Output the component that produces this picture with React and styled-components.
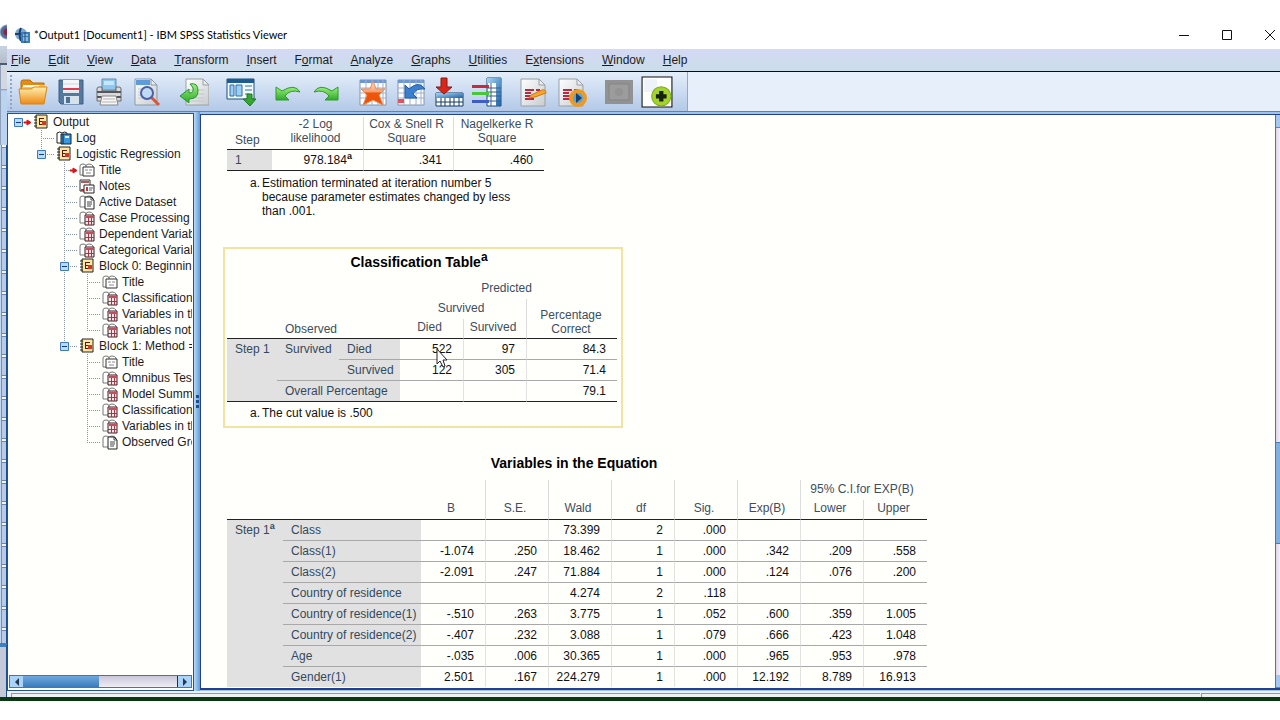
import React from "react";
import styled, { createGlobalStyle } from "styled-components";

const menus = [
  ["", "F", "ile"],
  ["", "E", "dit"],
  ["", "V", "iew"],
  ["", "D", "ata"],
  ["", "T", "ransform"],
  ["", "I", "nsert"],
  ["F", "o", "rmat"],
  ["", "A", "nalyze"],
  ["", "G", "raphs"],
  ["", "U", "tilities"],
  ["E", "x", "tensions"],
  ["", "W", "indow"],
  ["", "H", "elp"],
];

const tree = {
  label: "Output",
  icon: "book",
  marked: true,
  children: [
    { label: "Log", icon: "log" },
    {
      label: "Logistic Regression",
      icon: "book",
      children: [
        { label: "Title", icon: "title", marked: true },
        { label: "Notes", icon: "notes" },
        { label: "Active Dataset", icon: "page" },
        { label: "Case Processing", icon: "table" },
        { label: "Dependent Variab", icon: "table" },
        { label: "Categorical Variab", icon: "table" },
        {
          label: "Block 0: Beginning",
          icon: "book",
          children: [
            { label: "Title", icon: "title" },
            { label: "Classification", icon: "table" },
            { label: "Variables in th", icon: "table" },
            { label: "Variables not", icon: "table" },
          ],
        },
        {
          label: "Block 1: Method =",
          icon: "book",
          children: [
            { label: "Title", icon: "title" },
            { label: "Omnibus Tes", icon: "table" },
            { label: "Model Summ", icon: "table" },
            { label: "Classification", icon: "table" },
            { label: "Variables in th", icon: "table" },
            { label: "Observed Gro", icon: "page" },
          ],
        },
      ],
    },
  ],
};

const equation = [
  ["Class", "", "", "73.399", "2", ".000", "", "", ""],
  ["Class(1)", "-1.074", ".250", "18.462", "1", ".000", ".342", ".209", ".558"],
  ["Class(2)", "-2.091", ".247", "71.884", "1", ".000", ".124", ".076", ".200"],
  ["Country of residence", "", "", "4.274", "2", ".118", "", "", ""],
  ["Country of residence(1)", "-.510", ".263", "3.775", "1", ".052", ".600", ".359", "1.005"],
  ["Country of residence(2)", "-.407", ".232", "3.088", "1", ".079", ".666", ".423", "1.048"],
  ["Age", "-.035", ".006", "30.365", "1", ".000", ".965", ".953", ".978"],
  ["Gender(1)", "2.501", ".167", "224.279", "1", ".000", "12.192", "8.789", "16.913"],
  ["", "", "", "", "", "", "", "", ""],
];

/* ---------- toolbar drawings ---------- */

const Svg = ({ children, size = 30 }) => (
  <svg width={size} height={size} viewBox="0 0 30 30" aria-hidden="true">
    {children}
  </svg>
);

const Gradients = () => (
  <HiddenSvg width="0" height="0" aria-hidden="true">
    <defs>
      <linearGradient id="gOrange" x1="0" y1="0" x2="0" y2="1">
        <stop offset="0" stopColor="#fff0b0" />
        <stop offset="1" stopColor="#ee8a14" />
      </linearGradient>
      <linearGradient id="gStar" x1="0" y1="0" x2="0" y2="1">
        <stop offset="0" stopColor="#fde4d2" />
        <stop offset="0.45" stopColor="#f6a070" />
        <stop offset="0.5" stopColor="#f0560a" />
        <stop offset="1" stopColor="#e85008" />
      </linearGradient>
      <linearGradient id="gBlue" x1="0" y1="0" x2="1" y2="1">
        <stop offset="0" stopColor="#a8d4f4" />
        <stop offset="1" stopColor="#1c62a4" />
      </linearGradient>
      <linearGradient id="gGreen" x1="0" y1="0" x2="0" y2="1">
        <stop offset="0" stopColor="#9cf07c" />
        <stop offset="1" stopColor="#2eaa28" />
      </linearGradient>
      <linearGradient id="gPage" x1="0" y1="0" x2="1" y2="1">
        <stop offset="0" stopColor="#ffffff" />
        <stop offset="1" stopColor="#c8cccf" />
      </linearGradient>
    </defs>
  </HiddenSvg>
);

const FolderIcon = () => (
  <Svg>
    <path d="M3 26V5q0-2 2-2h7l3 3h11v19z" fill="#e58d12" stroke="#b86e0c" />
    <path d="M5 8h21v5H5z" fill="#fffbe8" />
    <path d="M4 10h16l2-2h5v4H4z" fill="#f6c35c" />
    <path d="M1 12h12l3-2h13l-3 17H3z" fill="url(#gOrange)" stroke="#d98612" />
  </Svg>
);

const SaveIcon = () => (
  <Svg>
    <path d="M3 3h24v24H5l-2-2z" fill="#54789e" stroke="#3f6084" />
    <path d="M7 3h16v13H7z" fill="#f4f6f9" />
    <path d="M7 11h16v2H7z" fill="#e03a50" />
    <path d="M7 7h16M7 15h16" stroke="#cfd8e2" />
    <path d="M8 19h15v8H8z" fill="#d7e3ea" />
    <path d="M10 20h4v6h-4z" fill="#4c6f94" />
  </Svg>
);

const PrintIcon = () => (
  <Svg>
    <path d="M8 2h14v11H8z" fill="#8cc8f0" stroke="#6a8ca6" />
    <path d="M10 4h10v4H10z" fill="#c8e6fa" />
    <path d="M3 12q0-2 2-2h3v4h14v-4h3q2 0 2 2v12H3z" fill="#dadada" stroke="#6a6a6a" />
    <path d="M3 15h24M3 20h24" stroke="#55585a" strokeWidth="2" />
    <path d="M8 19h14l2 9H6z" fill="#f6f6f6" stroke="#888" />
    <path d="M9 22h12M8 25h14" stroke="#b5b5b5" />
  </Svg>
);

const PreviewIcon = () => (
  <Svg>
    <path d="M3 2h16l6 6v20H3z" fill="url(#gPage)" stroke="#8b98a6" />
    <path d="M4 3h14v5H4z" fill="#5f9bd8" />
    <path d="M6 12h14M6 15h14M6 18h12M6 21h14" stroke="#c3cad0" />
    <path d="M19 2v6h6z" fill="#e8ecef" stroke="#8b98a6" />
    <path d="m19 20 8 8" stroke="#d9563a" strokeWidth="3" />
    <circle cx="15" cy="16" r="6" fill="#b9d9f6" fillOpacity="0.8" stroke="#4b5fa8" strokeWidth="2" />
  </Svg>
);

const ExportIcon = () => (
  <Svg>
    <path d="M7 2h17l6 6v20H7z" fill="url(#gPage)" stroke="#9aa0a5" />
    <path d="M11 13h14M11 17h14M11 21h14M11 24h14" stroke="#c0c6ca" />
    <path d="M24 2v6h6z" fill="#e8ecef" stroke="#9aa0a5" />
    <path d="M11 7q8-2 8 7 0 8-9 8v4L1 19l9-7v4q5 0 4-5-1-2-3-4z" fill="url(#gGreen)" stroke="#279238" />
  </Svg>
);

const RecallIcon = () => (
  <Svg>
    <path d="M1 2h27v20H1z" fill="#f4f9fd" stroke="#1b4f80" />
    <path d="M1 2h27v4H1z" fill="#1d5b91" />
    <path d="M4 8h4v11H4zM10 8h6v11h-6z" fill="#9bd0f4" stroke="#2e6da4" />
    <path d="M19 9h7M19 13h7M19 17h4" stroke="#8bb9dd" strokeWidth="2" />
    <path d="M21 17h5v5h4l-6 7-7-7h4z" fill="#35a632" stroke="#1f7a20" />
  </Svg>
);

const UndoIcon = ({ flip }) => (
  <Svg>
    <path
      d="M3 10v13h13l-4-4q5-7 15-4-5-9-18-1z"
      fill="url(#gGreen)"
      stroke="#2f9a2c"
      transform={flip ? "translate(30 0) scale(-1 1)" : undefined}
    />
  </Svg>
);

const Grid = ({ x = 2, y = 3, w = 26, h = 25, head = 3 }) => (
  <g>
    <path d={`M${x} ${y}h${w}v${h}h${-w}z`} fill="#fff" stroke="#8194ad" />
    <path d={`M${x} ${y}h${w}v${head}h${-w}z`} fill="#6d96d4" />
    <path
      d={`M${x} ${y + 8}h${w}M${x} ${y + 13}h${w}M${x} ${y + 18}h${w}M${x + 6} ${y}v${h}M${x + 12} ${y}v${h}M${x + 18} ${y}v${h}M${x + 23} ${y}v${h}`}
      stroke="#9eb0cc"
    />
  </g>
);

const StarIcon = () => (
  <Svg>
    <Grid />
    <path d="m15 4 3 8h9l-6 6 4 10-10-5-10 5 4-10-6-6h9z" fill="url(#gStar)" stroke="#e68a5c" />
  </Svg>
);

const GotoCaseIcon = () => (
  <Svg>
    <Grid />
    <path d="M2 22h6v4H2z" fill="#e8505c" />
    <path d="M9 8v13h12l-4-4q3-6 12-5Q23 3 13 12z" fill="#3b7fd0" stroke="#245c9e" />
  </Svg>
);

const InsertIcon = () => (
  <Svg>
    <path d="M2 16h27v13H2z" fill="#fff" stroke="#123c66" />
    <path d="M2 16h27v5H2z" fill="url(#gBlue)" />
    <path d="M2 25h27M7 21v8M11 21v8M16 21v8M20 21v8M25 21v8" stroke="#123c66" />
    <path d="M7 1h6v9h5l-8 7-8-7h5z" fill="#d8281c" stroke="#8d1710" />
  </Svg>
);

const VariablesIcon = () => (
  <Svg>
    <path d="M15 1h14v28H15z" fill="#fff" stroke="#184a7c" />
    <path d="M15 1h14v5H15zM24 1h5v28h-5z" fill="url(#gBlue)" />
    <path d="M15 11h14M15 15h14M15 19h14M15 24h14M19 6v23" stroke="#345f8d" />
    <path d="M0 8h17v3H0z" fill="#c42b3c" />
    <path d="M0 15h17v3H0z" fill="#48c73a" />
    <path d="M0 23h17v3H0z" fill="#3d5cc4" />
  </Svg>
);

const ScriptIcon = ({ play }) => (
  <Svg>
    <path d="M2 2h18l6 6v21H2z" fill="url(#gPage)" stroke="#9aa0a5" />
    <path d="M20 2v6h6z" fill="#eee" stroke="#9aa0a5" />
    <path d="M6 13h9M17 13h4M6 16h6M6 19h12M6 22h9" stroke="#b62b3e" strokeWidth="2" />
    {play ? (
      <g>
        <circle cx="21" cy="21" r="7" fill="#59a5dd" stroke="#ee9a20" strokeWidth="4" />
        <path d="m19 16 6 5-6 5z" fill="#173f6e" />
      </g>
    ) : (
      <path d="m12 18 11-5q4-1 4 3l-11 4-6 1z" fill="#f5a82c" stroke="#cf7712" />
    )}
  </Svg>
);

const DesignateIcon = () => (
  <Svg>
    <path d="M1 3h28v24H1z" fill="#929292" />
    <path d="M5 7h20v16H5z" fill="#9c9c9c" stroke="#858585" />
    <circle cx="15" cy="15" r="4" fill="#939393" />
  </Svg>
);

const AddIcon = () => (
  <Svg size={32}>
    <path d="M1 1h28v28H1z" fill="#fff" stroke="#111" />
    <path d="M3 3h12v12H3z" fill="#eef3fa" />
    <circle cx="19" cy="19" r="9" fill="#a4d32c" stroke="#7fae1c" />
    <path d="M19 14v10M14 19h10" stroke="#162210" strokeWidth="4" />
  </Svg>
);

const toolGroups = [
  [
    ["Open", <FolderIcon />],
    ["Save", <SaveIcon />],
    ["Print", <PrintIcon />],
    ["Print preview", <PreviewIcon />],
  ],
  [["Export", <ExportIcon />]],
  [["Recall dialogs", <RecallIcon />]],
  [
    ["Undo", <UndoIcon />],
    ["Redo", <UndoIcon flip />],
  ],
  [
    ["Go to data", <StarIcon />],
    ["Go to case", <GotoCaseIcon />],
    ["Go to variable", <InsertIcon />],
    ["Variables", <VariablesIcon />],
  ],
  [
    ["Edit script", <ScriptIcon />],
    ["Run script", <ScriptIcon play />],
  ],
  [
    ["Designate window", <DesignateIcon />],
    ["Add", <AddIcon />],
  ],
];

const AppLogo = () => (
  <svg width="16" height="16" viewBox="0 0 16 16" aria-hidden="true">
    <circle cx="7" cy="7" r="6" fill="#7fa9cd" />
    <path d="M7 1q-3 6 0 13M1 7h12" stroke="#1b3f70" strokeWidth="2" fill="none" />
    <path d="M7 5h9v11H7z" fill="#3c7eb6" />
    <path d="M9 8h5M9 11h5M9 13h5" stroke="#e3f0fa" />
    <path d="M11 5v11" stroke="#1e4d80" />
  </svg>
);

/* ---------- outline drawings ---------- */

const OpenBook = () => (
  <path d="M1 13V4q0-2 3-2t3 2q0-2 3-2t4 2v9H1zM7 4v9" fill="#fff" stroke="#777" />
);

const treeIcons = {
  book: (
    <g>
      <path d="M3 1h11v13H3z" fill="#fbe9a0" stroke="#222" />
      <path d="M1 3h3M1 6h3M1 9h3M1 12h3" stroke="#222" />
      <path d="M6.500 4v7M6 4.500h5M6 7.500h4M6 10.500h5" stroke="#5a1a12" />
      <path d="M9 7h4v4H9z" fill="#d8342a" />
    </g>
  ),
  log: (
    <g>
      <path d="M1 13V3q3-2 5 0 3-2 5 0v10z" fill="#fff" stroke="#222" />
      <path d="M5 4h10v10H5z" fill="#3a98dc" stroke="#123" />
      <path d="M7 4v10" stroke="#123" />
      <path d="M9 6h4v2H9z" fill="#dff0fb" />
    </g>
  ),
  title: (
    <g>
      <OpenBook />
      <path d="M4 5h11v9H4z" fill="#fff" stroke="#333" />
      <path d="M6 8h3M10 8h3M7 11h5" stroke="#888" />
    </g>
  ),
  notes: (
    <g>
      <path d="M1 2h10v11H1z" fill="#fff" stroke="#333" />
      <path d="M2 3h8v2H2z" fill="#b55" />
      <path d="M2 11h3v2H2z" fill="#b33" />
      <path d="M5 7h10v8H5z" fill="#fff" stroke="#222" />
      <path d="M7 10h2M7 12h2" stroke="#c33" strokeWidth="2" />
      <path d="M10 10h4M10 12h3" stroke="#557" />
    </g>
  ),
  page: (
    <g>
      <OpenBook />
      <path d="M6 3h6l3 3v9H6z" fill="#fff" stroke="#222" />
      <path d="M12 3v3h3M8 8h5M8 10h5M8 12h4" stroke="#444" fill="none" />
    </g>
  ),
  table: (
    <g>
      <OpenBook />
      <path d="M6 5h9v10H6z" fill="#f6e4e6" stroke="#3a1c22" />
      <path d="M7 6h8v2H7z" fill="#c0505c" />
      <path d="M6 11.500h9M9.500 8v7M12.500 8v7" stroke="#a03a4a" />
    </g>
  ),
};

const Guide = ({ kind, toggle, marked, root }) => (
  <GuideSvg width="23" height="16" viewBox="0 0 23 16" aria-hidden="true">
    {!root && kind !== "none" && <path d={kind === "end" ? "M8.500 0v8" : "M8.500 0v16"} />}
    {!root && (kind === "end" || kind === "tee") && <path d="M8 8.500h14" />}
    {toggle && (
      <g strokeDasharray="none">
        <path d="M4.500 4.500h8v8h-8z" fill="#b9dcf8" stroke="#3f78b8" />
        <path d="M6 8.500h5" stroke="#123c78" />
      </g>
    )}
    {marked && (
      <path d="M14 8h3V6l4 2.500L17 11V9h-3z" fill="#d8141c" stroke="#d8141c" strokeDasharray="none" />
    )}
  </GuideSvg>
);

const TreeNode = ({ node, lines = [], last = true, root = false }) => (
  <li>
    <TreeRow>
      {lines.map((on, i) => (
        <Guide key={i} kind={on ? "line" : "none"} />
      ))}
      <Guide kind={last ? "end" : "tee"} toggle={!!node.children} marked={node.marked} root={root} />
      <svg width="16" height="16" viewBox="0 0 16 16" aria-hidden="true">
        {treeIcons[node.icon]}
      </svg>
      <span>{node.label}</span>
    </TreeRow>
    {node.children && (
      <TreeList>
        {node.children.map((child, i) => (
          <TreeNode
            key={i}
            node={child}
            lines={[...lines, !last]}
            last={i === node.children.length - 1}
          />
        ))}
      </TreeList>
    )}
  </li>
);

/* ---------- output tables ---------- */

const Columns = ({ widths }) => (
  <colgroup>
    {widths.map((w, i) => (
      <Column key={i} $width={w} />
    ))}
  </colgroup>
);

const ModelSummary = () => (
  <Block>
    <PivotTable>
      <Columns widths={[45, 91, 90, 91]} />
      <thead>
        <tr>
          <HeadCell $left $low>Step</HeadCell>
          <HeadCell>-2 Log likelihood</HeadCell>
          <HeadCell $rule>Cox &amp; Snell R Square</HeadCell>
          <HeadCell $rule>Nagelkerke R Square</HeadCell>
        </tr>
      </thead>
      <tbody>
        <tr>
          <LabelCell>1</LabelCell>
          <ValueCell>978.184<Sup>a</Sup></ValueCell>
          <ValueCell $rule>.341</ValueCell>
          <ValueCell $rule>.460</ValueCell>
        </tr>
      </tbody>
    </PivotTable>
    <Footnote $long>
      <span>a.</span>
      <p>Estimation terminated at iteration number 5 because parameter estimates changed by less than .001.</p>
    </Footnote>
  </Block>
);

const ClassificationTable = () => (
  <Block $selected>
    <PivotTable>
      <Caption>Classification Table<Sup $title>a</Sup></Caption>
      <Columns widths={[50, 62, 61, 63, 63, 91]} />
      <thead>
        <HeadRow>
          <HeadCell colSpan={3} />
          <HeadCell colSpan={3}>Predicted</HeadCell>
        </HeadRow>
        <HeadRow>
          <HeadCell colSpan={3} />
          <HeadCell colSpan={2}>Survived</HeadCell>
          <HeadCell rowSpan={2} $rule $low>Percentage Correct</HeadCell>
        </HeadRow>
        <HeadRow>
          <HeadCell />
          <HeadCell colSpan={2} $left $low>Observed</HeadCell>
          <HeadCell>Died</HeadCell>
          <HeadCell $rule>Survived</HeadCell>
        </HeadRow>
      </thead>
      <tbody>
        <tr>
          <LabelCell rowSpan={3}>Step 1</LabelCell>
          <LabelCell rowSpan={2} $line>Survived</LabelCell>
          <LabelCell $line>Died</LabelCell>
          <ValueCell>
            522
            <Pointer width="12" height="20" viewBox="0 0 12 20" aria-hidden="true">
              <path d="M1 1v15l3-3 3 6 2-1-2-6h4z" fill="#fff" stroke="#222" />
            </Pointer>
          </ValueCell>
          <ValueCell $rule>97</ValueCell>
          <ValueCell $rule>84.3</ValueCell>
        </tr>
        <tr>
          <LabelCell $line>Survived</LabelCell>
          <ValueCell>122</ValueCell>
          <ValueCell $rule>305</ValueCell>
          <ValueCell $rule>71.4</ValueCell>
        </tr>
        <tr>
          <LabelCell colSpan={2}>Overall Percentage</LabelCell>
          <ValueCell />
          <ValueCell $rule />
          <ValueCell $rule>79.1</ValueCell>
        </tr>
      </tbody>
    </PivotTable>
    <Footnote>
      <span>a.</span>
      <p>The cut value is .500</p>
    </Footnote>
  </Block>
);

const EquationTable = () => (
  <Block>
    <PivotTable>
      <Caption>Variables in the Equation</Caption>
      <Columns widths={[56, 138, 64, 63, 63, 63, 63, 63, 63, 64]} />
      <thead>
        <HeadRow>
          <HeadCell colSpan={2} rowSpan={2} />
          <HeadCell rowSpan={2}>B</HeadCell>
          {["S.E.", "Wald", "df", "Sig.", "Exp(B)"].map((name) => (
            <HeadCell key={name} rowSpan={2} $rule>{name}</HeadCell>
          ))}
          <HeadCell colSpan={2} $rule>95% C.I.for EXP(B)</HeadCell>
        </HeadRow>
        <HeadRow>
          <HeadCell $rule>Lower</HeadCell>
          <HeadCell $rule>Upper</HeadCell>
        </HeadRow>
      </thead>
      <tbody>
        {equation.map(([name, ...values], row) => (
          <tr key={name}>
            {row === 0 && <LabelCell rowSpan={equation.length}>Step 1<Sup>a</Sup></LabelCell>}
            <LabelCell $line>{name}</LabelCell>
            {values.map((value, i) => (
              <ValueCell key={i} $rule={i > 0}>{value}</ValueCell>
            ))}
          </tr>
        ))}
      </tbody>
    </PivotTable>
  </Block>
);

export const App = () => {
  return (
    <Page>
      <GlobalStyle />
      <Gradients />
      <Desktop>
        <BackWindow>
          <BackTitle />
          <BackMenu />
          <BackTools />
          <BackCells />
          <BackFoot />
        </BackWindow>
        <Viewer>
          <TitleBar>
            <AppLogo />
            <h1>*Output1 [Document1] - IBM SPSS Statistics Viewer</h1>
            <WindowButtons>
              <button type="button" aria-label="Minimize">
                <svg width="10" height="10"><path d="M0 5.500h10" /></svg>
              </button>
              <button type="button" aria-label="Maximize">
                <svg width="10" height="10"><path d="M.5.5h9v9h-9z" /></svg>
              </button>
              <button type="button" aria-label="Close">
                <svg width="10" height="10"><path d="m0 0 10 10M10 0 0 10" /></svg>
              </button>
            </WindowButtons>
          </TitleBar>
          <MenuBar>
            {menus.map(([before, key, after]) => (
              <button type="button" key={before + key + after}>
                {before}<u>{key}</u>{after}
              </button>
            ))}
          </MenuBar>
          <ToolBar>
            <Tools>
              <Grip />
              {toolGroups.map((group, i) => (
                <ToolGroup key={i}>
                  {group.map(([name, icon]) => (
                    <ToolButton type="button" key={name} aria-label={name}>
                      {icon}
                    </ToolButton>
                  ))}
                </ToolGroup>
              ))}
            </Tools>
          </ToolBar>
          <Body>
            <Outline>
              <TreeList>
                <TreeNode node={tree} root />
              </TreeList>
              <HScroll>
                <ScrollArrow type="button" aria-label="Scroll left">
                  <svg width="6" height="8"><path d="M5 0v8L1 4z" /></svg>
                </ScrollArrow>
                <HThumb />
                <HTrack />
                <ScrollArrow type="button" aria-label="Scroll right">
                  <svg width="6" height="8"><path d="M1 0v8l4-4z" /></svg>
                </ScrollArrow>
              </HScroll>
            </Outline>
            <Splitter>
              <i /><i /><i />
            </Splitter>
            <Contents>
              <Document>
                <ModelSummary />
                <ClassificationTable />
                <EquationTable />
              </Document>
              <VScroll>
                <VArrow type="button" aria-label="Scroll up" />
                <VTrack $grow={315} />
                <VThumb />
                <VTrack $grow={131} />
                <VArrow type="button" aria-label="Scroll down" />
              </VScroll>
            </Contents>
          </Body>
          <StatusBar>
            <div />
            <div />
          </StatusBar>
        </Viewer>
      </Desktop>
    </Page>
  );
};

const GlobalStyle = createGlobalStyle`
  * {
    box-sizing: border-box;
  }
  body {
    margin: 0;
    background: #fff;
    font-family: "Liberation Sans", Arial, sans-serif;
    font-size: 12px;
    color: #1c1c1c;
  }
  button {
    border: 0;
    padding: 0;
    background: none;
    font: inherit;
    color: inherit;
  }
`;

const HiddenSvg = styled.svg`
  position: absolute;
`;

const Page = styled.div`
  display: flex;
  flex-direction: column;
  height: 100vh;
  padding: 20px 0 19px;
`;

const Desktop = styled.div`
  flex: 1;
  min-height: 0;
  display: flex;
  border-bottom: 4px solid #0b3a12;
`;

const BackWindow = styled.div`
  width: 7px;
  display: flex;
  flex-direction: column;
  background: #c3d7ee;
`;

const BackTitle = styled.div`
  height: 26px;
  background: radial-gradient(circle at 7px 12px, #8a2440 3px, #4d6e9c 4px, #4d6e9c 6px, #fff 8px);
`;

const BackMenu = styled.div`
  height: 19px;
  background: linear-gradient(#c8d3e2, #b4bccb);
  border-bottom: 2px solid #4a5a70;
`;

const BackTools = styled.div`
  height: 80px;
  border-left: 1px solid #8fa0b8;
  background: linear-gradient(#d3d8e0 24px, #7c96b8 24px, #b9d3f0 26px);
`;

const BackCells = styled.div`
  flex: 1;
  margin-left: 1px;
  border-left: 1px solid #7890ac;
  border-right: 1px solid #1d4d94;
  background: repeating-linear-gradient(#f2f6fb 0 2px, #6d86a6 2px 3px, #b7cbe6 3px 20px, #6d86a6 20px 21px);
`;

const BackFoot = styled.div`
  height: 54px;
  border-top: 4px solid #3d80c0;
  border-right: 1px solid #1d4d94;
  background: #c3c9d8;
`;

const Viewer = styled.div`
  flex: 1;
  min-width: 0;
  display: flex;
  flex-direction: column;
`;

const TitleBar = styled.header`
  height: 29px;
  display: flex;
  align-items: center;
  padding: 0 5px 0 7px;
  gap: 4px;
  background: #fff;
  & h1 {
    flex: 1;
    margin: 0;
    font-family: Lato, "Open Sans", sans-serif;
    font-size: 11px;
    font-weight: 400;
    color: #000;
  }
`;

const WindowButtons = styled.div`
  display: flex;
  gap: 33px;
  & button {
    width: 10px;
    height: 10px;
  }
  & svg {
    display: block;
    fill: none;
    stroke: #111;
  }
`;

const MenuBar = styled.nav`
  height: 23px;
  display: flex;
  align-items: center;
  gap: 18px;
  padding-left: 4px;
  background: linear-gradient(#d4d9f4, #cbdde9);
  border-bottom: 1px solid #0c0c14;
`;

const ToolBar = styled.div`
  height: 39px;
  background: #e7f0fa;
`;

const Tools = styled.div`
  width: fit-content;
  height: 39px;
  display: flex;
  align-items: center;
  gap: 9px;
  padding-right: 11px;
  border-right: 1px solid #93a9c6;
  background: linear-gradient(#e4eefa, #b3c9e7);
`;

const Grip = styled.span`
  width: 2px;
  height: 34px;
  margin: 0 -7px 0 3px;
  background: repeating-linear-gradient(#8fa6c4 0 2px, transparent 2px 4px);
`;

const ToolGroup = styled.div`
  display: flex;
`;

const ToolButton = styled.button`
  width: 38px;
  height: 34px;
  display: flex;
  align-items: center;
  justify-content: center;
`;

const Body = styled.div`
  flex: 1;
  min-height: 0;
  display: flex;
  background: #9fc4ec;
  border-top: 1px solid #5a82bc;
`;

const Outline = styled.aside`
  width: 187px;
  display: flex;
  flex-direction: column;
  justify-content: space-between;
  padding: 0 1px 2px 1px;
  margin-top: 1px;
  border: 1px solid #23528f;
  background: #fffffc;
`;

const TreeList = styled.ul`
  list-style: none;
  margin: 0;
  padding: 0;
`;

const TreeRow = styled.div`
  height: 16px;
  display: flex;
  align-items: center;
  overflow: hidden;
  white-space: nowrap;
  padding-left: 1px;
  & svg {
    flex-shrink: 0;
  }
  & span {
    margin-left: 4px;
  }
`;

const GuideSvg = styled.svg`
  fill: none;
  stroke: #8a94a0;
  stroke-dasharray: 1 1;
`;

const HScroll = styled.div`
  height: 13px;
  display: flex;
  border: 1px solid #3e78b4;
`;

const ScrollArrow = styled.button`
  width: 13px;
  display: flex;
  align-items: center;
  justify-content: center;
  background: #a9d3f8;
  & svg {
    fill: #24384f;
  }
`;

const HThumb = styled.div`
  flex: 76;
  background: linear-gradient(#6fa8de, #3c7cbe);
`;

const HTrack = styled.div`
  flex: 79;
  background: linear-gradient(#c9c6da, #efedf6);
  border-right: 1px solid #16305a;
`;

const Splitter = styled.div`
  width: 6px;
  display: flex;
  flex-direction: column;
  align-items: center;
  justify-content: center;
  gap: 2px;
  background: linear-gradient(90deg, #b9d9f7, #5f9bdc);
  & i {
    width: 3px;
    height: 3px;
    background: #1c4e92;
  }
`;

const Contents = styled.main`
  flex: 1;
  min-width: 0;
  display: flex;
  margin: 2px 0 1px;
  border: solid #24408c;
  border-width: 1px 0 2px 1px;
`;

const Document = styled.div`
  flex: 1;
  min-width: 0;
  overflow: hidden;
  padding-left: 22px;
  border: solid #fffffc;
  border-width: 0 0 1px;
  background: #fffffc;
`;

const VScroll = styled.div`
  width: 5px;
  display: flex;
  flex-direction: column;
  border-left: 1px solid #3e7fa8;
`;

const VArrow = styled.button`
  height: 13px;
  background: #a4c8f0;
  border-bottom: 1px solid #5788bd;
`;

const VTrack = styled.div`
  flex: ${(props) => props.$grow};
  background: linear-gradient(90deg, #dcd6e6, #f4eef8);
`;

const VThumb = styled.div`
  flex: 100;
  background: #82b0e0;
  border: solid #4a7db5;
  border-width: 1px 0;
`;

const StatusBar = styled.footer`
  height: 6px;
  display: flex;
  gap: 1px;
  padding: 2px 0 0 4px;
  background: #eef2f4;
  & div {
    border: solid #8c9c9c;
    border-width: 1px 0 0 1px;
  }
  & div:first-child {
    flex: 1;
  }
  & div:last-child {
    width: 79px;
  }
`;

const Block = styled.section`
  width: fit-content;
  padding: 0 4px 5px 2px;
  margin-bottom: 20px;
  border: 2px solid ${(props) => (props.$selected ? "#f1e3a0" : "transparent")};
`;

const PivotTable = styled.table`
  table-layout: fixed;
  width: 1px;
  border-collapse: separate;
  border-spacing: 0;
  line-height: 14px;
  & thead tr:last-child th,
  & thead th[rowspan] {
    border-bottom: 1px solid #222;
  }
  & tbody tr:last-child td,
  & tbody tr:last-child th,
  & tbody th[rowspan="3"] {
    border-bottom: 1px solid #222;
  }
`;

const Caption = styled.caption`
  padding: 3px 6px 7px 0;
  line-height: 20px;
  font-size: 14px;
  font-weight: 700;
  color: #000;
`;

const Column = styled.col`
  width: ${(props) => props.$width}px;
`;

const HeadRow = styled.tr`
  height: 20px;
`;

const HeadCell = styled.th`
  padding: ${(props) => (props.$low ? "0 10px 2px 8px" : "0 5px 4px 1px")};
  vertical-align: bottom;
  text-align: ${(props) => (props.$left ? "left" : "center")};
  font-weight: 400;
  color: #3c4e60;
  border-left: ${(props) => (props.$rule ? "1px solid #dcdcdc" : "0")};
`;

const LabelCell = styled.th`
  height: 21px;
  padding: 3px 0 3px 8px;
  vertical-align: top;
  text-align: left;
  font-weight: 400;
  white-space: nowrap;
  color: #34495c;
  background: #e1e1e1;
  border-bottom: ${(props) => (props.$line ? "1px solid #a8a8a8" : "0")};
`;

const ValueCell = styled.td`
  position: relative;
  height: 21px;
  padding: 3px 11px 3px 0;
  text-align: right;
  color: #111;
  border-bottom: 1px solid #a8a8a8;
  border-left: ${(props) => (props.$rule ? "1px solid #e2e2e2" : "0")};
`;

const Sup = styled.sup`
  font-size: ${(props) => (props.$title ? 12 : 9)}px;
  font-weight: 700;
  line-height: 0;
`;

const Footnote = styled.div`
  display: flex;
  gap: 2px;
  padding: ${(props) => (props.$long ? "5px 0 2px 23px" : "4px 0 1px 23px")};
  line-height: 14px;
  color: #111;
  & p {
    margin: 0;
    max-width: 256px;
  }
`;

const Pointer = styled.svg`
  position: absolute;
  left: 36px;
  top: 9px;
  z-index: 1;
`;

export default App;
